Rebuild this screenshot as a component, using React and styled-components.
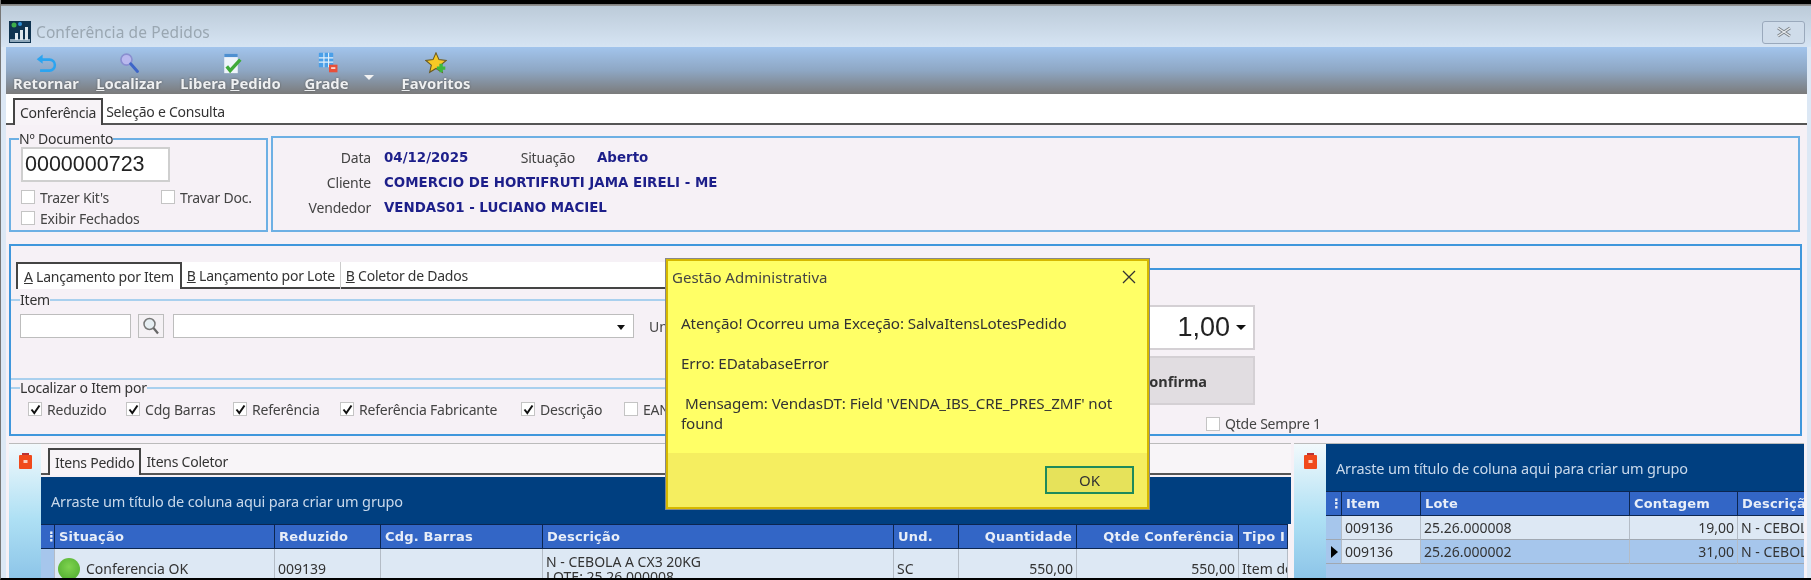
import React from "react";
import styled, { createGlobalStyle } from "styled-components";

const Global = createGlobalStyle`
  html, body { margin: 0; padding: 0; background: #dce8f5; }
  body { font-family: "Noto Sans", "Open Sans", sans-serif; color: #222; overflow: hidden; }
  * { box-sizing: border-box; }
`;

const Page = styled.div`
  position: relative; width: 1811px; height: 580px; overflow: hidden;
  background: #dce8f5; filter: blur(0.6px); border-bottom: 2px solid #000; border-left: 1px solid #777;
`;
const TopEdge = styled.div`height: 6px; background: linear-gradient(#000 0, #000 4px, #777 4px, #999 6px);`;
const TitleBar = styled.div`
  height: 41px; display: flex; align-items: center; padding: 11px 4px 0 8px; gap: 5px;
  background: linear-gradient(#bccbd9, #d6e4f3);
`;
const WindowTitle = styled.span`font-size: 15.5px; color: #9aa7b2; flex: 1; letter-spacing: .1px;`;
const WinClose = styled.button`
  width: 43px; height: 23px; margin-right: 2px; border: 1px solid #9aa9bc; border-radius: 3px; padding: 0;
  background: #cfdcea; display: flex; align-items: center; justify-content: center;
`;
const Toolbar = styled.div`
  height: 47px; margin: 0 4px 0 5px; padding: 0 0 0 6px; display: flex; align-items: stretch;
  background: linear-gradient(#a2c4ec, #8ea7c4 50%, #7b7b7b);
`;
const ToolButton = styled.div`
  width: ${p => p.$w}px; margin-right: ${p => p.$gap || 0}px; display: flex; flex-direction: column; align-items: center;
  justify-content: flex-end; position: relative;
`;
const ToolIcon = styled.svg`width: 22px; height: 22px; display: block; margin-left: ${p => p.$ml || 0}px;`;
const ToolLabel = styled.span`
  font-size: 14.8px; font-weight: 700; color: #eef0f2; line-height: 19px; white-space: nowrap; padding-bottom: 1px;
  text-shadow: 0 0 2px #555; u { text-decoration-thickness: 1px; text-underline-offset: 1px; }
`;
const Caret = styled.span`
  align-self: center; margin: 0 26px 0 14px; width: 0; height: 0; position: relative; top: 7px;
  border-left: 5px solid transparent; border-right: 5px solid transparent; border-top: 5px solid #f2f2f2;
`;
const MainTabs = styled.div`
  height: 31px; margin: 0 4px 0 5px; background: #fff; border-bottom: 2px solid #555; padding: 4px 0 0 7px;
  display: flex; align-items: stretch;
`;
const Tab = styled.div`
  display: flex; align-items: center; font-size: 14px; white-space: nowrap; letter-spacing: -.25px;
  padding: ${p => p.$pad || "0 4px"}; color: #333; margin-bottom: -2px; position: relative;
  ${p => p.$active && `border: 2px solid #444; border-bottom: none; background: ${p.$bg || "#f7f3f7"};`}
  ${p => p.$divider && `border-left: 1px solid #ccc;`}
`;
const Content = styled.div`margin: 0 4px 0 5px; height: 453px; background: #f6f1f6; padding-top: 7px;`;
const TopPanels = styled.div`display: flex; gap: 3px; padding-left: 3px; height: 100px;`;
const DocSet = styled.fieldset`
  width: 259px; height: 100px; margin: 0; padding: 1px 0 0 10px; border: 2px solid #6db0e4; min-width: 0;
`;
const SetLegend = styled.legend`
  font-size: 14px; line-height: 14px; padding: 0; margin-left: ${p => p.$ml || 0}px; color: #333; letter-spacing: -.2px;
`;
const DocInput = styled.div`
  width: 149px; height: 35px; background: #fff; border: 2px solid #cfcfcf; font-size: 21.500px; line-height: 31px;
  padding-left: 2px; color: #222; font-family: "Liberation Sans", sans-serif;
`;
const CheckRow = styled.div`display: flex; height: 14px; align-items: center; margin-top: ${p => p.$mt || 0}px;`;
const CheckLabel = styled.label`
  display: flex; align-items: center; gap: ${p => p.$gap || 5}px; font-size: 14px; color: #444; white-space: nowrap; letter-spacing: -.2px;
  width: ${p => (p.$w ? p.$w + "px" : "auto")}; flex: none;
`;
const Box = styled.span`
  width: 14px; height: 14px; flex: none; background: #fff; border: 1px solid #c4c4c4; display: flex; align-items: center; justify-content: center;
`;
const InfoPanel = styled.div`
  flex: none; width: 1529px; height: 96px; margin-top: 4px; border: 2px solid #6db0e4; padding: 8px 0 0 0;
  display: flex; flex-direction: column; gap: 3px;
`;
const InfoRow = styled.div`display: flex; align-items: center; height: 22px;`;
const InfoKey = styled.span`width: ${p => p.$w || 98}px; text-align: right; font-size: 14px; color: #444; letter-spacing: -.2px; flex: none;`;
const InfoValue = styled.span`
  margin-left: ${p => p.$ml || 13}px; font-family: "DejaVu Sans", sans-serif; font-weight: 700; font-size: 13.400px; color: #1d1f8a; white-space: nowrap; width: ${p => (p.$w ? p.$w + "px" : "auto")};
`;
const BigPanel = styled.div`
  margin: 12px 0 0 3px; width: 1793px; height: 192px; border: 2px solid #3f97dc; display: flex;
`;
const LeftCol = styled.div`width: 1090px; flex: none; padding-top: 16px; display: flex; flex-direction: column;`;
const SubTabs = styled.div`
  height: 27px; background: #fff; margin-left: 5px; border-bottom: 2px solid #444; display: flex; align-items: stretch; flex: none;
`;
const ItemSet = styled.fieldset`
  margin: 4px 0 0 0; padding: 7px 0 0 9px; height: 87px; min-width: 0; border: none;
  border-top: 2px solid #a9d0ee; border-bottom: 2px solid #a9d0ee; flex: none;
`;
const LocateSet = styled(ItemSet)`margin-top: 1px; height: 50px; border-bottom: none; padding: 3px 0 0 17px;`;
const FormRow = styled.div`display: flex; align-items: center; height: 24px;`;
const Field = styled.div`width: ${p => p.$w}px; height: 24px; background: #fff; border: 1px solid #bdbdbd; margin-right: ${p => p.$mr || 0}px; position: relative; flex: none;`;
const SearchBtn = styled(Field)`background: #f4f1f4; display: flex; align-items: center; justify-content: center;`;
const ComboArrow = styled.span`
  position: absolute; right: 8px; top: 10px; width: 0; height: 0; border-left: 4px solid transparent; border-right: 4px solid transparent; border-top: 5px solid #111;
`;
const UnLabel = styled.span`font-size: 14px; color: #444; margin-left: 15px;`;
const Checks = styled.div`display: flex; align-items: center; height: 22px;`;
const RightCol = styled.div`flex: 1; margin-top: 22px; border-top: 2px solid #3f97dc; padding: 35px 0 0 0;`;
const RightInner = styled.div`width: 154px; display: flex; flex-direction: column;`;
const Spinner = styled.div`
  height: 45px; background: #fff; border: 2px solid #d4d0d4; display: flex; align-items: center; justify-content: flex-end; padding-right: 7px; gap: 6px;
  font-family: "Liberation Sans", sans-serif; font-size: 27px; color: #222;
`;
const SmallCaret = styled.span`width: 0; height: 0; border-left: 5px solid transparent; border-right: 5px solid transparent; border-top: 5px solid #111;`;
const ConfirmBtn = styled.div`
  height: 49px; margin-top: 6px; background: #e1dde1; border: 2px solid #d4d0d4; display: flex; align-items: center; justify-content: flex-end; padding-right: 46px;
  font-size: 14.5px; font-weight: 700; color: #333;
`;
const QtdRow = styled.div`margin: 9px -70px 0 105px; display: flex;`;
const Lower = styled.div`display: flex; margin: 7px 0 0 3px; height: 137px; gap: 3px;`;
const Region = styled.div`width: ${p => p.$w}px; flex: none; display: flex; border-top: 1px solid #bbb;`;
const Rail = styled.div`
  width: 32px; flex: none; display: flex; justify-content: center; padding-top: 9px;
  background: linear-gradient(#f2f9fc 0, #aee0f4 55%, #8cc4e8 100%);
`;
const GridColumn = styled.div`flex: 1; min-width: 0; display: flex; flex-direction: column; overflow: hidden;`;
const LowerTabs = styled.div`height: 31px; flex: none; padding: 4px 0 0 7px; display: flex; background: #f8f5f8; border-bottom: 2px solid #555; margin-bottom: 2px;`;
const GroupBar = styled.div`
  height: 47px; flex: none; background: #003f80; color: #c8d8ea; font-size: 14.5px; display: flex; align-items: center; padding-left: ${p => p.$pl}px; letter-spacing: -.15px;
`;
const Row = styled.div`
  display: grid; grid-template-columns: ${p => p.$cols}; height: ${p => p.$h}px; flex: none;
`;
const HeadCell = styled.div`
  background: #3366c6; color: #e8eef8; font-family: "DejaVu Sans", sans-serif; font-weight: 700; font-size: 13px;
  display: flex; align-items: center; padding: 0 4px; white-space: nowrap; overflow: hidden; border: 1px solid #0c2650; border-left-width: 0;
  justify-content: ${p => (p.$right ? "flex-end" : "flex-start")}; letter-spacing: .2px;
`;
const Cell = styled.div`
  background: ${p => p.$bg || "#dde8f4"}; font-size: 14px; color: #333; padding: 0 3px; display: flex; align-items: center; white-space: nowrap; overflow: hidden;
  border-right: 1px solid #b4bcc6; border-bottom: 1px solid #a0a8b2; line-height: 15px; gap: 6px;
  justify-content: ${p => (p.$right ? "flex-end" : "flex-start")};
`;
const Pointer = styled.span`width: 0; height: 0; border-top: 6px solid transparent; border-bottom: 6px solid transparent; border-left: 7px solid #000; margin-left: 2px;`;
const StatusDot = styled.span`width: 22px; height: 22px; border-radius: 50%; flex: none; background: radial-gradient(circle at 50% 40%, #7fd34f, #4aa82c);`;
const EmptyFill = styled.div`flex: 1; background: #a6c6ec;`;
const Dialog = styled.div`
  position: absolute; left: 665px; top: 259px; width: 483px; height: 250px; background: #ffff66; border: 2px solid #d6b800; outline: 1px solid #888;
  display: flex; flex-direction: column; z-index: 5; color: #333;
`;
const DialogHead = styled.div`height: 32px; display: flex; align-items: center; padding: 0 11px 0 4px; justify-content: space-between; font-size: 15px; color: #444;`;
const DialogBody = styled.div`flex: 1; padding: 21px 10px 0 13px; font-size: 15.200px; line-height: 20px; letter-spacing: -.1px;`;
const Para = styled.p`margin: 0 0 20px; text-indent: ${p => p.$ind || 0}px;`;
const DialogFoot = styled.div`height: 54px; flex: none; background: #f5ee60; display: flex; justify-content: flex-end; align-items: flex-start; padding: 13px 13px 0 0;`;
const OkBtn = styled.button`
  width: 89px; height: 28px; background: #e6e25a; border: 2px solid #1f8a5a; font: 15px "Noto Sans", sans-serif; color: #333; padding: 0;
`;

const Trash = () => (
  <svg width="13" height="16" viewBox="0 0 13 16">
    <rect x="3" y="0" width="7" height="2" fill="#b33" />
    <rect x="0" y="2" width="13" height="14" rx="1" fill="#f04a1c" />
    <rect x="4.5" y="7" width="4" height="3" fill="#fbd0c0" />
  </svg>
);
const Check = ({ on, children, w }) => (
  <CheckLabel $w={w}>
    <Box>
      {on && (
        <svg width="11" height="11" viewBox="0 0 11 11">
          <path d="M1.500 5.500 L4.300 9 L9.500 1.500" fill="none" stroke="#111" strokeWidth="2" />
        </svg>
      )}
    </Box>
    {children}
  </CheckLabel>
);

const leftCols = "14px 220px 106px 162px 351px 65px 118px 162px 49px";
const rightCols = "16px 79px 209px 108px 70px";

export default function App() {
  return (
    <Page>
      <Global />
      <TopEdge />
      <TitleBar>
        <svg width="22" height="22" viewBox="0 0 22 22">
          <rect width="22" height="22" fill="#0f3350" />
          <rect x="1" y="18" width="20" height="3" fill="#8fa8bb" />
          <rect x="6" y="12" width="3" height="7" fill="#dfe8ee" />
          <rect x="11" y="9" width="3" height="10" fill="#dfe8ee" />
          <rect x="16" y="6" width="3" height="13" fill="#dfe8ee" />
          <circle cx="5" cy="4" r="2.5" fill="#3fae4a" />
          <circle cx="11" cy="3" r="2" fill="#2f8fd8" />
        </svg>
        <WindowTitle>Conferência de Pedidos</WindowTitle>
        <WinClose aria-label="Fechar">
          <svg width="18" height="12" viewBox="0 0 18 12">
            <path d="M3 2 L15 10 M15 2 L3 10" stroke="#7b8288" strokeWidth="3" />
            <path d="M3 2 L15 10 M15 2 L3 10" stroke="#e9ecef" strokeWidth="1.2" />
          </svg>
        </WinClose>
      </TitleBar>
      <Toolbar>
        <ToolButton $w={68} $gap={15}>
          <ToolIcon viewBox="0 0 26 26">
            <path d="M8 9 H17 a6.5 6.5 0 0 1 0 13 H6" fill="none" stroke="#2ba4f0" strokeWidth="3" />
            <path d="M2 8.5 L9 3 V14 Z" fill="#2ba4f0" />
          </ToolIcon>
          <ToolLabel>Retornar</ToolLabel>
        </ToolButton>
        <ToolButton $w={68} $gap={16}>
          <ToolIcon viewBox="0 0 26 26">
            <circle cx="10" cy="9" r="6.5" fill="#b9b8ee" stroke="#8a8fd0" strokeWidth="2" />
            <path d="M15 14 L23 23" stroke="#3e66c8" strokeWidth="3.5" strokeLinecap="round" />
          </ToolIcon>
          <ToolLabel><u>L</u>ocalizar</ToolLabel>
        </ToolButton>
        <ToolButton $w={103} $gap={21}>
          <ToolIcon viewBox="0 0 26 26">
            <path d="M5 2 H21 V25 H5 Z" fill="#eef4fa" />
            <rect x="5" y="2" width="16" height="4" fill="#4e8fd0" />
            <path d="M8 17 L12 22 L24 9" fill="none" stroke="#3faa3a" strokeWidth="4" />
          </ToolIcon>
          <ToolLabel>Libera <u>P</u>edido</ToolLabel>
        </ToolButton>
        <ToolButton $w={47}>
          <ToolIcon viewBox="0 0 26 26" $ml={4}>
            <rect x="1" y="1" width="17" height="17" rx="1" fill="#4a9fe8" />
            <path d="M1 7 H18 M1 12 H18 M7 1 V18 M12.500 1 V18" stroke="#e4f1fb" strokeWidth="1.300" />
            <rect x="13" y="15" width="10" height="9" fill="#e8503a" />
            <rect x="15.500" y="18" width="5" height="2" fill="#fbe0d8" />
          </ToolIcon>
          <ToolLabel><u>G</u>rade</ToolLabel>
        </ToolButton>
        <Caret />
        <ToolButton $w={72}>
          <ToolIcon viewBox="0 0 26 26">
            <path d="M13 1 L16.500 9 L25 10 L18.500 15.500 L20.500 24 L13 19.500 L5.500 24 L7.500 15.500 L1 10 L9.500 9 Z" fill="#f7c925" stroke="#6b5a20" strokeWidth="1.300" />
            <path d="M17 14 H21 V17 H24 V21 H21 V24 H17 V21 H14 V17 H17 Z" fill="#3cb83c" />
          </ToolIcon>
          <ToolLabel><u>F</u>avoritos</ToolLabel>
        </ToolButton>
      </Toolbar>
      <MainTabs>
        <Tab $active $pad="0 5px">Conferência</Tab>
        <Tab $pad="0 3px">Seleção e Consulta</Tab>
      </MainTabs>
      <Content>
        <TopPanels>
          <DocSet>
            <SetLegend $ml={-2}>Nº Documento</SetLegend>
            <DocInput>0000000723</DocInput>
            <CheckRow $mt={8}>
              <Check w={140}>Trazer Kit's</Check>
              <Check>Travar Doc.</Check>
            </CheckRow>
            <CheckRow $mt={7}>
              <Check>Exibir Fechados</Check>
            </CheckRow>
          </DocSet>
          <InfoPanel>
            <InfoRow>
              <InfoKey>Data</InfoKey>
              <InfoValue $w={136}>04/12/2025</InfoValue>
              <InfoKey $w={55}>Situação</InfoKey>
              <InfoValue $ml={22}>Aberto</InfoValue>
            </InfoRow>
            <InfoRow>
              <InfoKey>Cliente</InfoKey>
              <InfoValue>COMERCIO DE HORTIFRUTI JAMA EIRELI - ME</InfoValue>
            </InfoRow>
            <InfoRow>
              <InfoKey>Vendedor</InfoKey>
              <InfoValue>VENDAS01 - LUCIANO MACIEL</InfoValue>
            </InfoRow>
          </InfoPanel>
        </TopPanels>
        <BigPanel>
          <LeftCol>
            <SubTabs>
              <Tab $active $bg="#fff" $pad="0 6px"><span><u>A</u> Lançamento por Item</span></Tab>
              <Tab $pad="0 5px"><span><u>B</u> Lançamento por Lote</span></Tab>
              <Tab $divider $pad="0 5px"><span><u>B</u> Coletor de Dados</span></Tab>
            </SubTabs>
            <ItemSet>
              <SetLegend>Item</SetLegend>
              <FormRow>
                <Field $w={111} $mr={7} />
                <SearchBtn $w={26} $mr={9}>
                  <svg width="20" height="20" viewBox="0 0 20 20">
                    <circle cx="8.500" cy="8" r="5.500" fill="#e6eef2" stroke="#777" strokeWidth="1.500" />
                    <path d="M12.500 12 L17 17.500" stroke="#666" strokeWidth="2.200" />
                  </svg>
                </SearchBtn>
                <Field $w={461}><ComboArrow /></Field>
                <UnLabel>Un. Medida</UnLabel>
              </FormRow>
            </ItemSet>
            <LocateSet>
              <SetLegend $ml={-8}>Localizar o Item por</SetLegend>
              <Checks>
                <Check on w={98}>Reduzido</Check>
                <Check on w={107}>Cdg Barras</Check>
                <Check on w={107}>Referência</Check>
                <Check on w={181}>Referência Fabricante</Check>
                <Check on w={103}>Descrição</Check>
                <Check>EAN</Check>
              </Checks>
            </LocateSet>
          </LeftCol>
          <RightCol>
            <RightInner>
              <Spinner>1,00<SmallCaret /></Spinner>
              <ConfirmBtn>Confirma</ConfirmBtn>
              <QtdRow><Check>Qtde Sempre 1</Check></QtdRow>
            </RightInner>
          </RightCol>
        </BigPanel>
        <Lower>
          <Region $w={1282}>
            <Rail><Trash /></Rail>
            <GridColumn>
              <LowerTabs>
                <Tab $active $pad="0 5px">Itens Pedido</Tab>
                <Tab $pad="0 5px">Itens Coletor</Tab>
              </LowerTabs>
              <GroupBar $pl={10}>Arraste um título de coluna aqui para criar um grupo</GroupBar>
              <Row $cols={leftCols} $h={25}>
                <HeadCell>⋮</HeadCell>
                <HeadCell>Situação</HeadCell>
                <HeadCell>Reduzido</HeadCell>
                <HeadCell>Cdg. Barras</HeadCell>
                <HeadCell>Descrição</HeadCell>
                <HeadCell>Und.</HeadCell>
                <HeadCell $right>Quantidade</HeadCell>
                <HeadCell $right>Qtde Conferência</HeadCell>
                <HeadCell>Tipo I</HeadCell>
              </Row>
              <Row $cols={leftCols} $h={40}>
                <Cell $bg="#a6c6ec" />
                <Cell><StatusDot />Conferencia OK</Cell>
                <Cell>009139</Cell>
                <Cell />
                <Cell><span>N - CEBOLA A CX3 20KG<br />LOTE: 25.26.000008</span></Cell>
                <Cell>SC</Cell>
                <Cell $right>550,00</Cell>
                <Cell $right>550,00</Cell>
                <Cell>Item do</Cell>
              </Row>
            </GridColumn>
          </Region>
          <Region $w={510}>
            <Rail><Trash /></Rail>
            <GridColumn>
              <GroupBar $pl={10}>Arraste um título de coluna aqui para criar um grupo</GroupBar>
              <Row $cols={rightCols} $h={25}>
                <HeadCell>⋮</HeadCell>
                <HeadCell>Item</HeadCell>
                <HeadCell>Lote</HeadCell>
                <HeadCell>Contagem</HeadCell>
                <HeadCell>Descrição</HeadCell>
              </Row>
              <Row $cols={rightCols} $h={24}>
                <Cell $bg="#a6c6ec" />
                <Cell>009136</Cell>
                <Cell>25.26.000008</Cell>
                <Cell $right>19,00</Cell>
                <Cell>N - CEBOLA</Cell>
              </Row>
              <Row $cols={rightCols} $h={24}>
                <Cell $bg="#a6c6ec"><Pointer /></Cell>
                <Cell>009136</Cell>
                <Cell $bg="#a6c6ec">25.26.000002</Cell>
                <Cell $bg="#a6c6ec" $right>31,00</Cell>
                <Cell $bg="#a6c6ec">N - CEBOLA</Cell>
              </Row>
              <EmptyFill />
            </GridColumn>
          </Region>
        </Lower>
      </Content>
      <Dialog>
        <DialogHead>
          Gestão Administrativa
          <svg width="14" height="14" viewBox="0 0 14 14">
            <path d="M1 1 L13 13 M13 1 L1 13" stroke="#333" strokeWidth="1.300" />
          </svg>
        </DialogHead>
        <DialogBody>
          <Para>Atenção! Ocorreu uma Exceção: SalvaItensLotesPedido</Para>
          <Para>Erro: EDatabaseError</Para>
          <Para $ind={4}>Mensagem: VendasDT: Field 'VENDA_IBS_CRE_PRES_ZMF' not found</Para>
        </DialogBody>
        <DialogFoot><OkBtn>OK</OkBtn></DialogFoot>
      </Dialog>
    </Page>
  );
}
